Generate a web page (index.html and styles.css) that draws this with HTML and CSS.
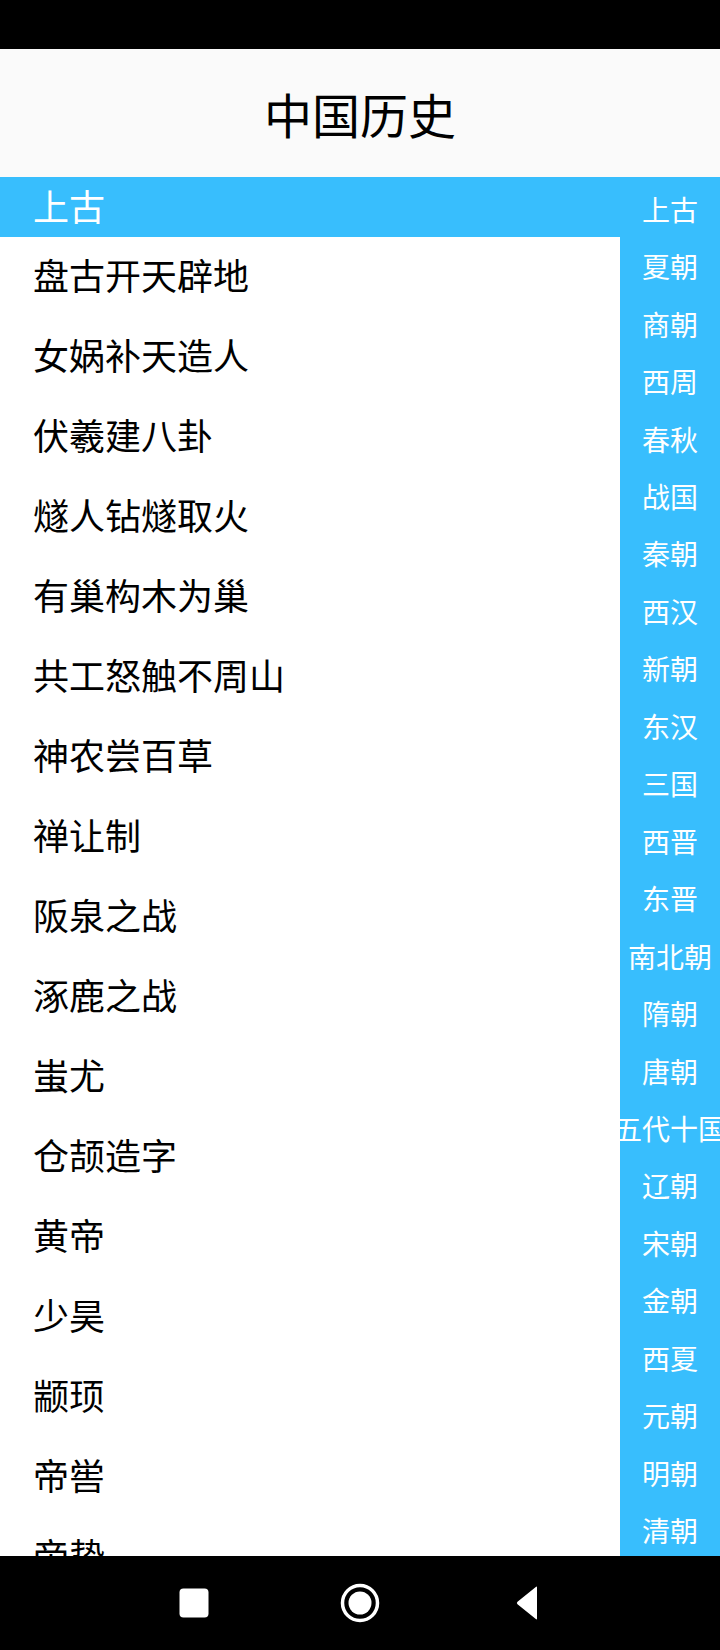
FILE: index.html
```html
<!DOCTYPE html>
<html lang="zh-CN">
<head>
<meta charset="utf-8">
<title>中国历史</title>
<link rel="stylesheet" href="styles.css">
</head>
<body>
<div class="phone">
  <div class="status-bar"></div>
  <header class="toolbar"><h1 class="title">中国历史</h1></header>
  <main class="content">
    <section class="list">
      <div class="section-header">上古</div>
      <div class="item">盘古开天辟地</div>
      <div class="item">女娲补天造人</div>
      <div class="item">伏羲建八卦</div>
      <div class="item">燧人钻燧取火</div>
      <div class="item">有巢构木为巢</div>
      <div class="item">共工怒触不周山</div>
      <div class="item">神农尝百草</div>
      <div class="item">禅让制</div>
      <div class="item">阪泉之战</div>
      <div class="item">涿鹿之战</div>
      <div class="item">蚩尤</div>
      <div class="item">仓颉造字</div>
      <div class="item">黄帝</div>
      <div class="item">少昊</div>
      <div class="item">颛顼</div>
      <div class="item">帝喾</div>
      <div class="item">帝挚</div>
      <div class="item">尧</div>
    </section>
    <nav class="sidebar">
      <div class="side-item">上古</div>
      <div class="side-item">夏朝</div>
      <div class="side-item">商朝</div>
      <div class="side-item">西周</div>
      <div class="side-item">春秋</div>
      <div class="side-item">战国</div>
      <div class="side-item">秦朝</div>
      <div class="side-item">西汉</div>
      <div class="side-item">新朝</div>
      <div class="side-item">东汉</div>
      <div class="side-item">三国</div>
      <div class="side-item">西晋</div>
      <div class="side-item">东晋</div>
      <div class="side-item">南北朝</div>
      <div class="side-item">隋朝</div>
      <div class="side-item">唐朝</div>
      <div class="side-item">五代十国</div>
      <div class="side-item">辽朝</div>
      <div class="side-item">宋朝</div>
      <div class="side-item">金朝</div>
      <div class="side-item">西夏</div>
      <div class="side-item">元朝</div>
      <div class="side-item">明朝</div>
      <div class="side-item">清朝</div>
    </nav>
  </main>
  <footer class="nav-bar">
    <svg class="nav-icon" width="40" height="40" viewBox="0 0 40 40"><rect x="5.5" y="5.5" width="29" height="29" rx="4" fill="#fff"/></svg>
    <svg class="nav-icon" width="40" height="40" viewBox="0 0 40 40"><circle cx="20" cy="20" r="17.5" fill="none" stroke="#fff" stroke-width="3.5"/><circle cx="20" cy="20" r="11.5" fill="#fff"/></svg>
    <svg class="nav-icon" width="40" height="40" viewBox="0 0 40 40"><path d="M31 4.5 L31 35.5 Q31 37 29.8 36 L11.5 21.2 Q10.2 20 11.5 18.8 L29.8 4 Q31 3 31 4.5 Z" fill="#fff"/></svg>
  </footer>
</div>
</body>
</html>
```

FILE: styles.css
```css
html, body {
  margin: 0;
  padding: 0;
  background: #000;
}

.phone {
  width: 720px;
  height: 1650px;
  display: flex;
  flex-direction: column;
  font-family: "Noto Sans CJK SC", "Noto Sans", sans-serif;
  overflow: hidden;
}

.status-bar {
  height: 49px;
  background: #000;
  flex: none;
}

.toolbar {
  height: 128px;
  flex: none;
  background: #fafafa;
  display: flex;
  align-items: center;
  justify-content: center;
}

.title {
  margin: 0;
  font-size: 48px;
  font-weight: 400;
  color: #000;
  line-height: 1;
}

.content {
  height: 1379px;
  flex: none;
  display: flex;
  background: #fff;
}

.list {
  flex: 1;
  overflow: hidden;
  display: flex;
  flex-direction: column;
}

.section-header {
  height: 60px;
  flex: none;
  box-sizing: border-box;
  background: #38befd;
  color: #fff;
  font-size: 36px;
  display: flex;
  align-items: center;
  padding: 0 0 4px 33px;
}

.item {
  height: 80px;
  flex: none;
  box-sizing: border-box;
  display: flex;
  align-items: center;
  padding: 0 0 6px 33px;
  font-size: 36px;
  color: #000;
}

.sidebar {
  width: 100px;
  flex: none;
  background: #38befd;
  display: flex;
  flex-direction: column;
  overflow: hidden;
}

.side-item {
  flex: 1;
  display: flex;
  align-items: center;
  justify-content: center;
  padding-top: 6px;
  color: #fff;
  font-size: 28px;
  white-space: nowrap;
}

.nav-bar {
  flex: 1;
  background: #000;
  display: flex;
  align-items: center;
  justify-content: center;
  gap: 126px;
}

.nav-icon {
  display: block;
}
```
